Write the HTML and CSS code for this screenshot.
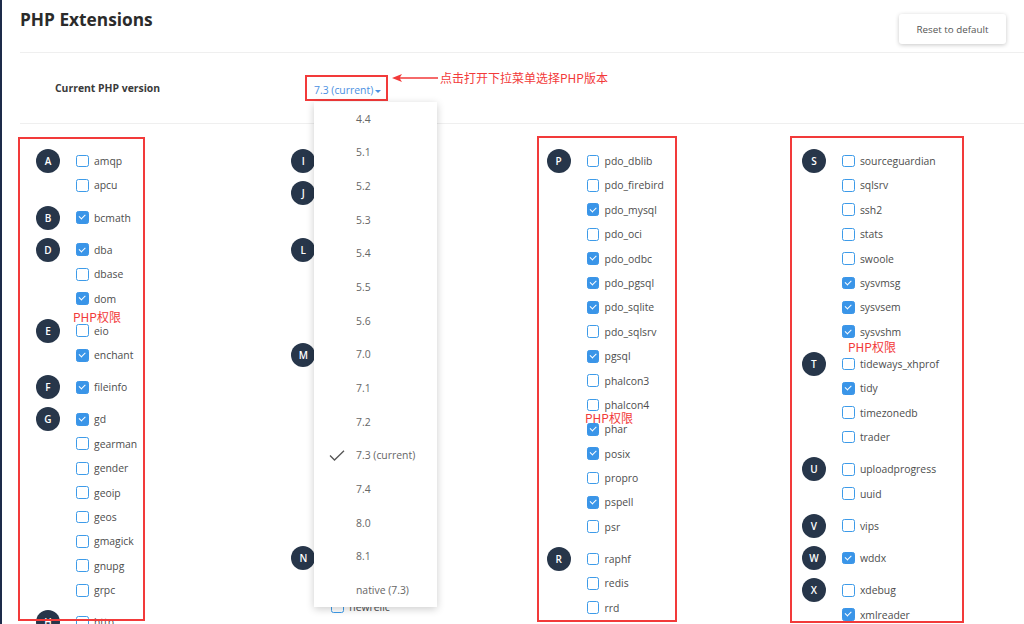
FILE: index.html
```html
<!DOCTYPE html>
<html lang="zh">
<head>
    <meta charset="utf-8">
    <title>PHP Extensions</title>
<link rel="stylesheet" href="styles.css">
</head>
<body>
<div class="page">
<div class="head">
    <h1>PHP Extensions</h1>
    <button class="reset">Reset to default</button>
</div>
<div class="version">
    <span class="version-label">Current PHP version</span>
    <div class="picker">
        <span class="toggle">7.3 (current)<span class="caret"></span></span>
        <span class="mark mark-toggle"></span>
        <div class="note">
            <svg width="46" height="10" viewBox="0 0 46 10"><path d="M0 5 L10 1 L8 4.2 L46 4.2 L46 5.8 L8 5.8 L10 9 Z" fill="#f23a3a"/></svg>
            <span>点击打开下拉菜单选择PHP版本</span>
        </div>
        <ul class="menu">
            <li>4.4</li>
            <li>5.1</li>
            <li>5.2</li>
            <li>5.3</li>
            <li>5.4</li>
            <li>5.5</li>
            <li>5.6</li>
            <li>7.0</li>
            <li>7.1</li>
            <li>7.2</li>
            <li class="current"><svg class="tick" width="16" height="11" viewBox="0 0 16 11"><path d="M1 5.5 L5.5 10 L15 0.8" fill="none" stroke="#555" stroke-width="1.3"/></svg>7.3 (current)</li>
            <li>7.4</li>
            <li>8.0</li>
            <li>8.1</li>
            <li>native (7.3)</li>
        </ul>
    </div>
</div>
<div class="exts">
    <div class="col">
        <div class="group"><span class="letter">A</span><ul class="items">
            <li><span class="box"></span>amqp</li>
            <li><span class="box"></span>apcu</li>
        </ul></div>
        <div class="group"><span class="letter">B</span><ul class="items">
            <li><span class="box on"></span>bcmath</li>
        </ul></div>
        <div class="group"><span class="letter">D</span><ul class="items">
            <li><span class="box on"></span>dba</li>
            <li><span class="box"></span>dbase</li>
            <li><span class="box on"></span>dom</li>
        </ul></div>
        <div class="group"><span class="letter">E</span><ul class="items">
            <li><span class="box"></span>eio</li>
            <li><span class="box on"></span>enchant</li>
        </ul></div>
        <div class="group"><span class="letter">F</span><ul class="items">
            <li><span class="box on"></span>fileinfo</li>
        </ul></div>
        <div class="group"><span class="letter">G</span><ul class="items">
            <li><span class="box on"></span>gd</li>
            <li><span class="box"></span>gearman</li>
            <li><span class="box"></span>gender</li>
            <li><span class="box"></span>geoip</li>
            <li><span class="box"></span>geos</li>
            <li><span class="box"></span>gmagick</li>
            <li><span class="box"></span>gnupg</li>
            <li><span class="box"></span>grpc</li>
        </ul></div>
        <div class="group"><span class="letter">H</span><ul class="items">
            <li><span class="box"></span>http</li>
        </ul></div>
    </div>
    <div class="col">
        <div class="group"><span class="letter">I</span><ul class="items">
            <li><span class="box"></span>ioncube_loader</li>
        </ul></div>
        <div class="group"><span class="letter">J</span><ul class="items">
            <li><span class="box"></span>jsmin</li>
            <li><span class="box on"></span>json</li>
        </ul></div>
        <div class="group"><span class="letter">L</span><ul class="items">
            <li><span class="box"></span>ldap</li>
            <li><span class="box"></span>leveldb</li>
            <li><span class="box"></span>luasandbox</li>
            <li><span class="box"></span>lzf</li>
        </ul></div>
        <div class="group"><span class="letter">M</span><ul class="items">
            <li><span class="box"></span>mailparse</li>
            <li><span class="box on"></span>mbstring</li>
            <li><span class="box"></span>mcrypt</li>
            <li><span class="box"></span>memcache</li>
            <li><span class="box"></span>memcached</li>
            <li><span class="box"></span>mongodb</li>
            <li><span class="box"></span>msgpack</li>
            <li><span class="box on"></span>mysqli</li>
        </ul></div>
        <div class="group"><span class="letter">N</span><ul class="items">
            <li><span class="box"></span>nd_mysqli</li>
            <li><span class="box"></span>nd_pdo_mysql</li>
            <li><span class="box"></span>newrelic</li>
        </ul></div>
    </div>
    <div class="col">
        <div class="group"><span class="letter">P</span><ul class="items">
            <li><span class="box"></span>pdo_dblib</li>
            <li><span class="box"></span>pdo_firebird</li>
            <li><span class="box on"></span>pdo_mysql</li>
            <li><span class="box"></span>pdo_oci</li>
            <li><span class="box on"></span>pdo_odbc</li>
            <li><span class="box on"></span>pdo_pgsql</li>
            <li><span class="box on"></span>pdo_sqlite</li>
            <li><span class="box"></span>pdo_sqlsrv</li>
            <li><span class="box on"></span>pgsql</li>
            <li><span class="box"></span>phalcon3</li>
            <li><span class="box"></span>phalcon4</li>
            <li><span class="box on"></span>phar</li>
            <li><span class="box on"></span>posix</li>
            <li><span class="box"></span>propro</li>
            <li><span class="box on"></span>pspell</li>
            <li><span class="box"></span>psr</li>
        </ul></div>
        <div class="group"><span class="letter">R</span><ul class="items">
            <li><span class="box"></span>raphf</li>
            <li><span class="box"></span>redis</li>
            <li><span class="box"></span>rrd</li>
        </ul></div>
    </div>
    <div class="col">
        <div class="group"><span class="letter">S</span><ul class="items">
            <li><span class="box"></span>sourceguardian</li>
            <li><span class="box"></span>sqlsrv</li>
            <li><span class="box"></span>ssh2</li>
            <li><span class="box"></span>stats</li>
            <li><span class="box"></span>swoole</li>
            <li><span class="box on"></span>sysvmsg</li>
            <li><span class="box on"></span>sysvsem</li>
            <li><span class="box on"></span>sysvshm</li>
        </ul></div>
        <div class="group"><span class="letter">T</span><ul class="items">
            <li><span class="box"></span>tideways_xhprof</li>
            <li><span class="box on"></span>tidy</li>
            <li><span class="box"></span>timezonedb</li>
            <li><span class="box"></span>trader</li>
        </ul></div>
        <div class="group"><span class="letter">U</span><ul class="items">
            <li><span class="box"></span>uploadprogress</li>
            <li><span class="box"></span>uuid</li>
        </ul></div>
        <div class="group"><span class="letter">V</span><ul class="items">
            <li><span class="box"></span>vips</li>
        </ul></div>
        <div class="group"><span class="letter">W</span><ul class="items">
            <li><span class="box on"></span>wddx</li>
        </ul></div>
        <div class="group"><span class="letter">X</span><ul class="items">
            <li><span class="box"></span>xdebug</li>
            <li><span class="box on"></span>xmlreader</li>
        </ul></div>
    </div>
    <span class="mark mark-c1"></span>
    <span class="mark mark-c3"></span>
    <span class="mark mark-c4"></span>
    <span class="tag tag-c1">PHP权限</span>
    <span class="tag tag-c3">PHP权限</span>
    <span class="tag tag-c4">PHP权限</span>
</div>
</div>
</body>
</html>
```

FILE: styles.css
```css
body {margin: 0; font-family: "Open Sans", "Noto Sans", sans-serif; color: #4d4d4d; background: #fff; overflow: hidden;}
.page {border-left: 2px solid #1d2b4a; padding-left: 18px; height: 624px; box-sizing: border-box; overflow: hidden;}

.head {display: flex; justify-content: space-between; align-items: flex-start; height: 53px; box-sizing: border-box; border-bottom: 1px solid #efefef; padding-right: 18px;}
.head h1 {margin: 8px 0 0 0; font-size: 17.3px; line-height: 24px; font-weight: 700; color: #2b2b2b;}
.reset {margin-top: 14px; width: 107px; height: 30px; border: none; border-radius: 3px; background: #fff; box-shadow: 0 1px 4px rgba(0,0,0,0.22); font-family: "Open Sans", sans-serif; font-size: 9.8px; color: #555; padding: 0;}

.version {display: flex; align-items: center; height: 71px; box-sizing: border-box; border-bottom: 1px solid #efefef; padding-left: 35px;}
.version-label {width: 259px; font-size: 10.4px; font-weight: 700; color: #3a3a3a;}
.picker {position: relative; height: 14px; line-height: 14px; z-index: 5;}
.toggle {font-size: 10.4px; color: #4a90e2;}
.caret {display: inline-block; margin-left: 2px; vertical-align: middle; border-left: 3px solid transparent; border-right: 3px solid transparent; border-top: 3.5px solid #4a90e2;}

.menu {position: absolute; left: 0; top: 21px; width: 123px; margin: 0; padding: 0; list-style: none; background: #fff; box-shadow: 0 2px 8px rgba(0,0,0,0.2);}
.menu li {position: relative; height: 33.67px; display: flex; align-items: center; padding-left: 42px; font-size: 10.4px; color: #666;}
.menu .tick {position: absolute; left: 15px; top: 11px;}

.note {position: absolute; left: 78px; top: -11px; display: flex; align-items: center; white-space: nowrap; gap: 2px;}
.note span {font-family: "Noto Sans CJK SC", sans-serif; font-size: 12px; line-height: 16px; color: #f23a3a;}

.mark {position: absolute; border: 2px solid #f23a3a; box-sizing: border-box; pointer-events: none;}
.mark-toggle {left: -9px; top: -6px; width: 83px; height: 26px;}
.mark-c1 {left: -2px; top: 13px; width: 127px; height: 484px;}
.mark-c3 {left: 517px; top: 12px; width: 140px; height: 486px;}
.mark-c4 {left: 769.5px; top: 12px; width: 174.5px; height: 487px;}
.tag {position: absolute; font-family: "Noto Sans CJK SC", sans-serif; font-size: 12px; line-height: 16px; color: #f23a3a; white-space: nowrap;}
.tag-c1 {left: 53px; top: 185px;}
.tag-c3 {left: 565px; top: 286px;}
.tag-c4 {left: 828px; top: 215px;}

.exts {position: relative; display: grid; grid-template-columns: repeat(4, 255.3px); padding-top: 24.8px;}
.group {display: flex; align-items: flex-start;}
.group + .group {margin-top: 7.8px;}
.letter {flex: none; width: 24px; height: 24px; margin: 0.2px 16px 0 16px; border-radius: 50%; background: #27364a; color: #fff; font-size: 10px; font-weight: 600; display: flex; align-items: center; justify-content: center;}
.items {list-style: none; margin: 0; padding: 0;}
.items li {height: 24.4px; display: flex; align-items: center; font-size: 10.4px; white-space: nowrap; color: #4d4d4d;}
.box {flex: none; position: relative; width: 12.8px; height: 12.8px; box-sizing: border-box; margin-right: 5.2px; border: 1.6px solid #3d9be9; border-radius: 2.4px; background: #fff;}
.box.on {background: #3a95e8; border-color: #3a95e8;}
.box.on::after {content: ""; position: absolute; left: 2.2px; top: 2.2px; width: 5px; height: 2.6px; border-left: 1.4px solid #fff; border-bottom: 1.4px solid #fff; transform: rotate(-45deg);}
```
